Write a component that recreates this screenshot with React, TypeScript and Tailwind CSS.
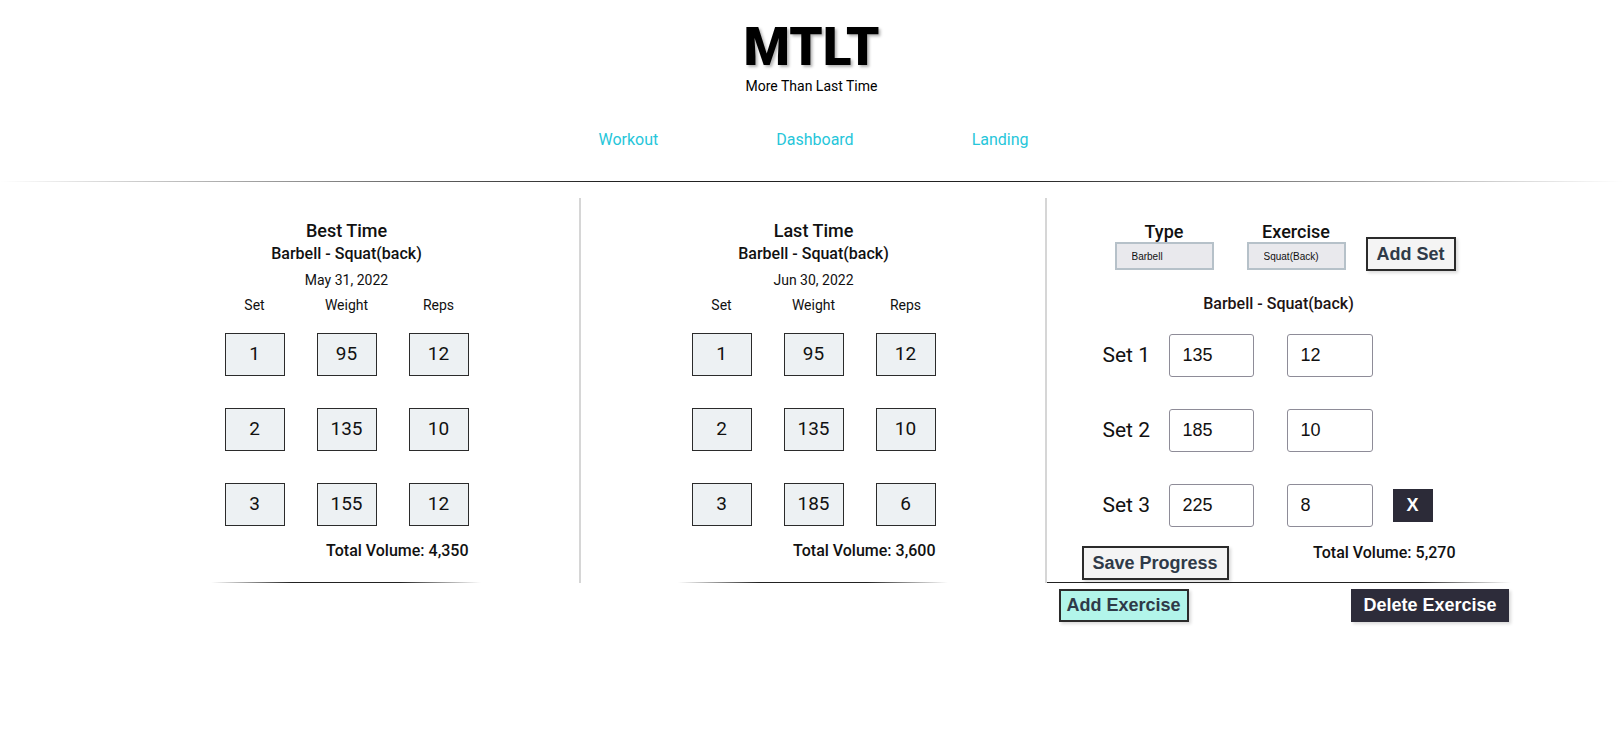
import React from "react";

const best = [
  ["1", "95", "12"],
  ["2", "135", "10"],
  ["3", "155", "12"],
];

const last = [
  ["1", "95", "12"],
  ["2", "135", "10"],
  ["3", "185", "6"],
];

const current = [
  ["Set 1", "135", "12"],
  ["Set 2", "185", "10"],
  ["Set 3", "225", "8"],
];

const HistoryColumn = ({
  title,
  date,
  rows,
  total,
  divider,
}: {
  title: string;
  date: string;
  rows: string[][];
  total: string;
  divider?: boolean;
}) => {
  return (
    <div className={`flex flex-col ${divider ? "border-l-2 border-[#d6d6d6]" : ""}`}>
      <div className="flex flex-col items-center pt-[21px] pl-[2px]">
        <h2 className="text-[18px] leading-[24px] font-medium">{title}</h2>
        <p className="text-[16px] leading-[22px] font-medium">Barbell - Squat(back)</p>
        <p className="mt-[5px] text-[14px] leading-[20px]">{date}</p>

        <div className="mt-[5px] grid w-[244px] grid-cols-3 gap-x-[32px] text-center text-[14px] leading-[20px]">
          <span>Set</span>
          <span>Weight</span>
          <span>Reps</span>
        </div>

        {/* rows */}
        <div className="mt-[18px] flex flex-col gap-y-[32px]">
          {rows.map((r, i) => (
            <div key={i} className="grid w-[244px] grid-cols-3 gap-x-[32px]">
              {r.map((v, j) => (
                <div
                  key={j}
                  className="flex h-[43px] w-[60px] items-center justify-center border border-[#2b2b2b] bg-[#edf1f3] text-[19px]"
                >
                  {v}
                </div>
              ))}
            </div>
          ))}
        </div>

        <p className="mt-[15px] w-[244px] text-right text-[16px] leading-[20px] font-medium">
          Total Volume: {total}
        </p>
      </div>

      <div className="mx-auto mt-auto h-px w-[270px] bg-[linear-gradient(to_right,transparent,#222_30%,#222_70%,transparent)]" />
    </div>
  );
};

const App = () => {
  return (
    <div className="min-h-screen bg-white font-['Roboto',sans-serif] text-[#111]">
      {/* HEADER */}
      <header className="flex flex-col items-center pt-[17px]">
        <h1 className="text-[53px] leading-[60px] font-black text-black [text-shadow:2px_2px_3px_rgba(0,0,0,0.3)]">
          MTLT
        </h1>
        <p className="-mt-[1px] text-[14px] leading-[20px] text-black">More Than Last Time</p>
      </header>

      {/* NAV */}
      <nav className="mt-[32px] flex justify-center gap-[118px] pl-[4px] text-[16px] leading-[24px] text-[#26c6da]">
        <a href="#">Workout</a>
        <a href="#">Dashboard</a>
        <a href="#">Landing</a>
      </nav>

      <div className="mt-[29px] h-px w-full bg-[linear-gradient(to_right,transparent,#222_37%,#222_63%,transparent)]" />

      {/* COLUMNS */}
      <div className="mx-auto mt-[16px] grid w-[1398px] grid-cols-3">
        <HistoryColumn title="Best Time" date="May 31, 2022" rows={best} total="4,350" />
        <HistoryColumn title="Last Time" date="Jun 30, 2022" rows={last} total="3,600" divider />

        {/* CURRENT */}
        <div className="flex flex-col border-l-2 border-[#d6d6d6]">
          <div className="flex items-end pl-[68px] pt-[23px]">
            <div className="flex w-[99px] flex-col items-center">
              <span className="text-[18px] leading-[21px] font-medium">Type</span>
              <select className="h-[28px] w-[99px] appearance-none border-2 border-[#b6c1c9] bg-[#e9e9ed] pl-[15px] font-['Liberation_Sans',sans-serif] text-[10px] text-[#111] outline-none">
                <option>Barbell</option>
              </select>
            </div>
            <div className="ml-[33px] flex w-[99px] flex-col items-center">
              <span className="text-[18px] leading-[21px] font-medium">Exercise</span>
              <select className="h-[28px] w-[99px] appearance-none border-2 border-[#b6c1c9] bg-[#e9e9ed] pl-[15px] font-['Liberation_Sans',sans-serif] text-[10px] text-[#111] outline-none">
                <option>Squat(Back)</option>
              </select>
            </div>
            <button className="-mb-[1px] ml-[20px] h-[34px] border-2 border-[#2b2b2b] bg-[#f4f4f4] px-[9px] font-['Liberation_Sans',sans-serif] text-[18px] font-bold text-[#2f3a48] shadow-[2px_2px_3px_rgba(0,0,0,0.15)]">
              Add Set
            </button>
          </div>

          <p className="mt-[23px] text-center text-[16px] leading-[22px] font-medium text-[#1e1414]">
            Barbell - Squat(back)
          </p>

          <div className="mt-[19px] flex flex-col gap-y-[32px]">
            {current.map((r, i) => (
              <div key={i} className="flex items-center pl-[56px]">
                <span className="w-[66px] text-[21px]">{r[0]}</span>
                <input
                  defaultValue={r[1]}
                  className="h-[43px] w-[85px] rounded-[3px] border border-[#8e8c98] pl-[13px] font-['Liberation_Sans',sans-serif] text-[18px] outline-none"
                />
                <input
                  defaultValue={r[2]}
                  className="ml-[33px] h-[43px] w-[86px] rounded-[3px] border border-[#8e8c98] pl-[13px] font-['Liberation_Sans',sans-serif] text-[18px] outline-none"
                />
                {i === 2 && (
                  <button className="ml-[20px] h-[33px] w-[40px] bg-[#2c2b38] font-['Liberation_Sans',sans-serif] text-[18px] font-bold text-white">
                    X
                  </button>
                )}
              </div>
            ))}
          </div>

          <div className="mt-[16px] flex items-start justify-between pl-[35px] pr-[55px]">
            <button className="mt-[3px] h-[34px] border-2 border-[#2b2b2b] bg-[#f4f4f4] px-[9px] font-['Liberation_Sans',sans-serif] text-[18px] font-bold text-[#2f3a48] shadow-[2px_2px_3px_rgba(0,0,0,0.15)]">
              Save Progress
            </button>
            <p className="text-[16px] leading-[20px] font-medium">Total Volume: 5,270</p>
          </div>

          <div className="mt-[2px] h-px w-full bg-[linear-gradient(to_right,#222,#222_80%,transparent)]" />
        </div>
      </div>

      {/* EXERCISE ACTIONS */}
      <div className="mx-auto mt-[6px] grid w-[1398px] grid-cols-3">
        <div />
        <div />
        <div className="flex justify-between pl-[14px] pr-[2px]">
          <button className="h-[33px] border-2 border-[#2b2b2b] bg-[#b2f5ea] px-[6px] font-['Liberation_Sans',sans-serif] text-[18px] font-bold text-[#2f3a48] shadow-[2px_2px_3px_rgba(0,0,0,0.15)]">
            Add Exercise
          </button>
          <button className="h-[33px] bg-[#2d2c3a] px-[12px] font-['Liberation_Sans',sans-serif] text-[18px] font-bold text-white shadow-[2px_2px_3px_rgba(0,0,0,0.15)]">
            Delete Exercise
          </button>
        </div>
      </div>
    </div>
  );
};

export default App;
